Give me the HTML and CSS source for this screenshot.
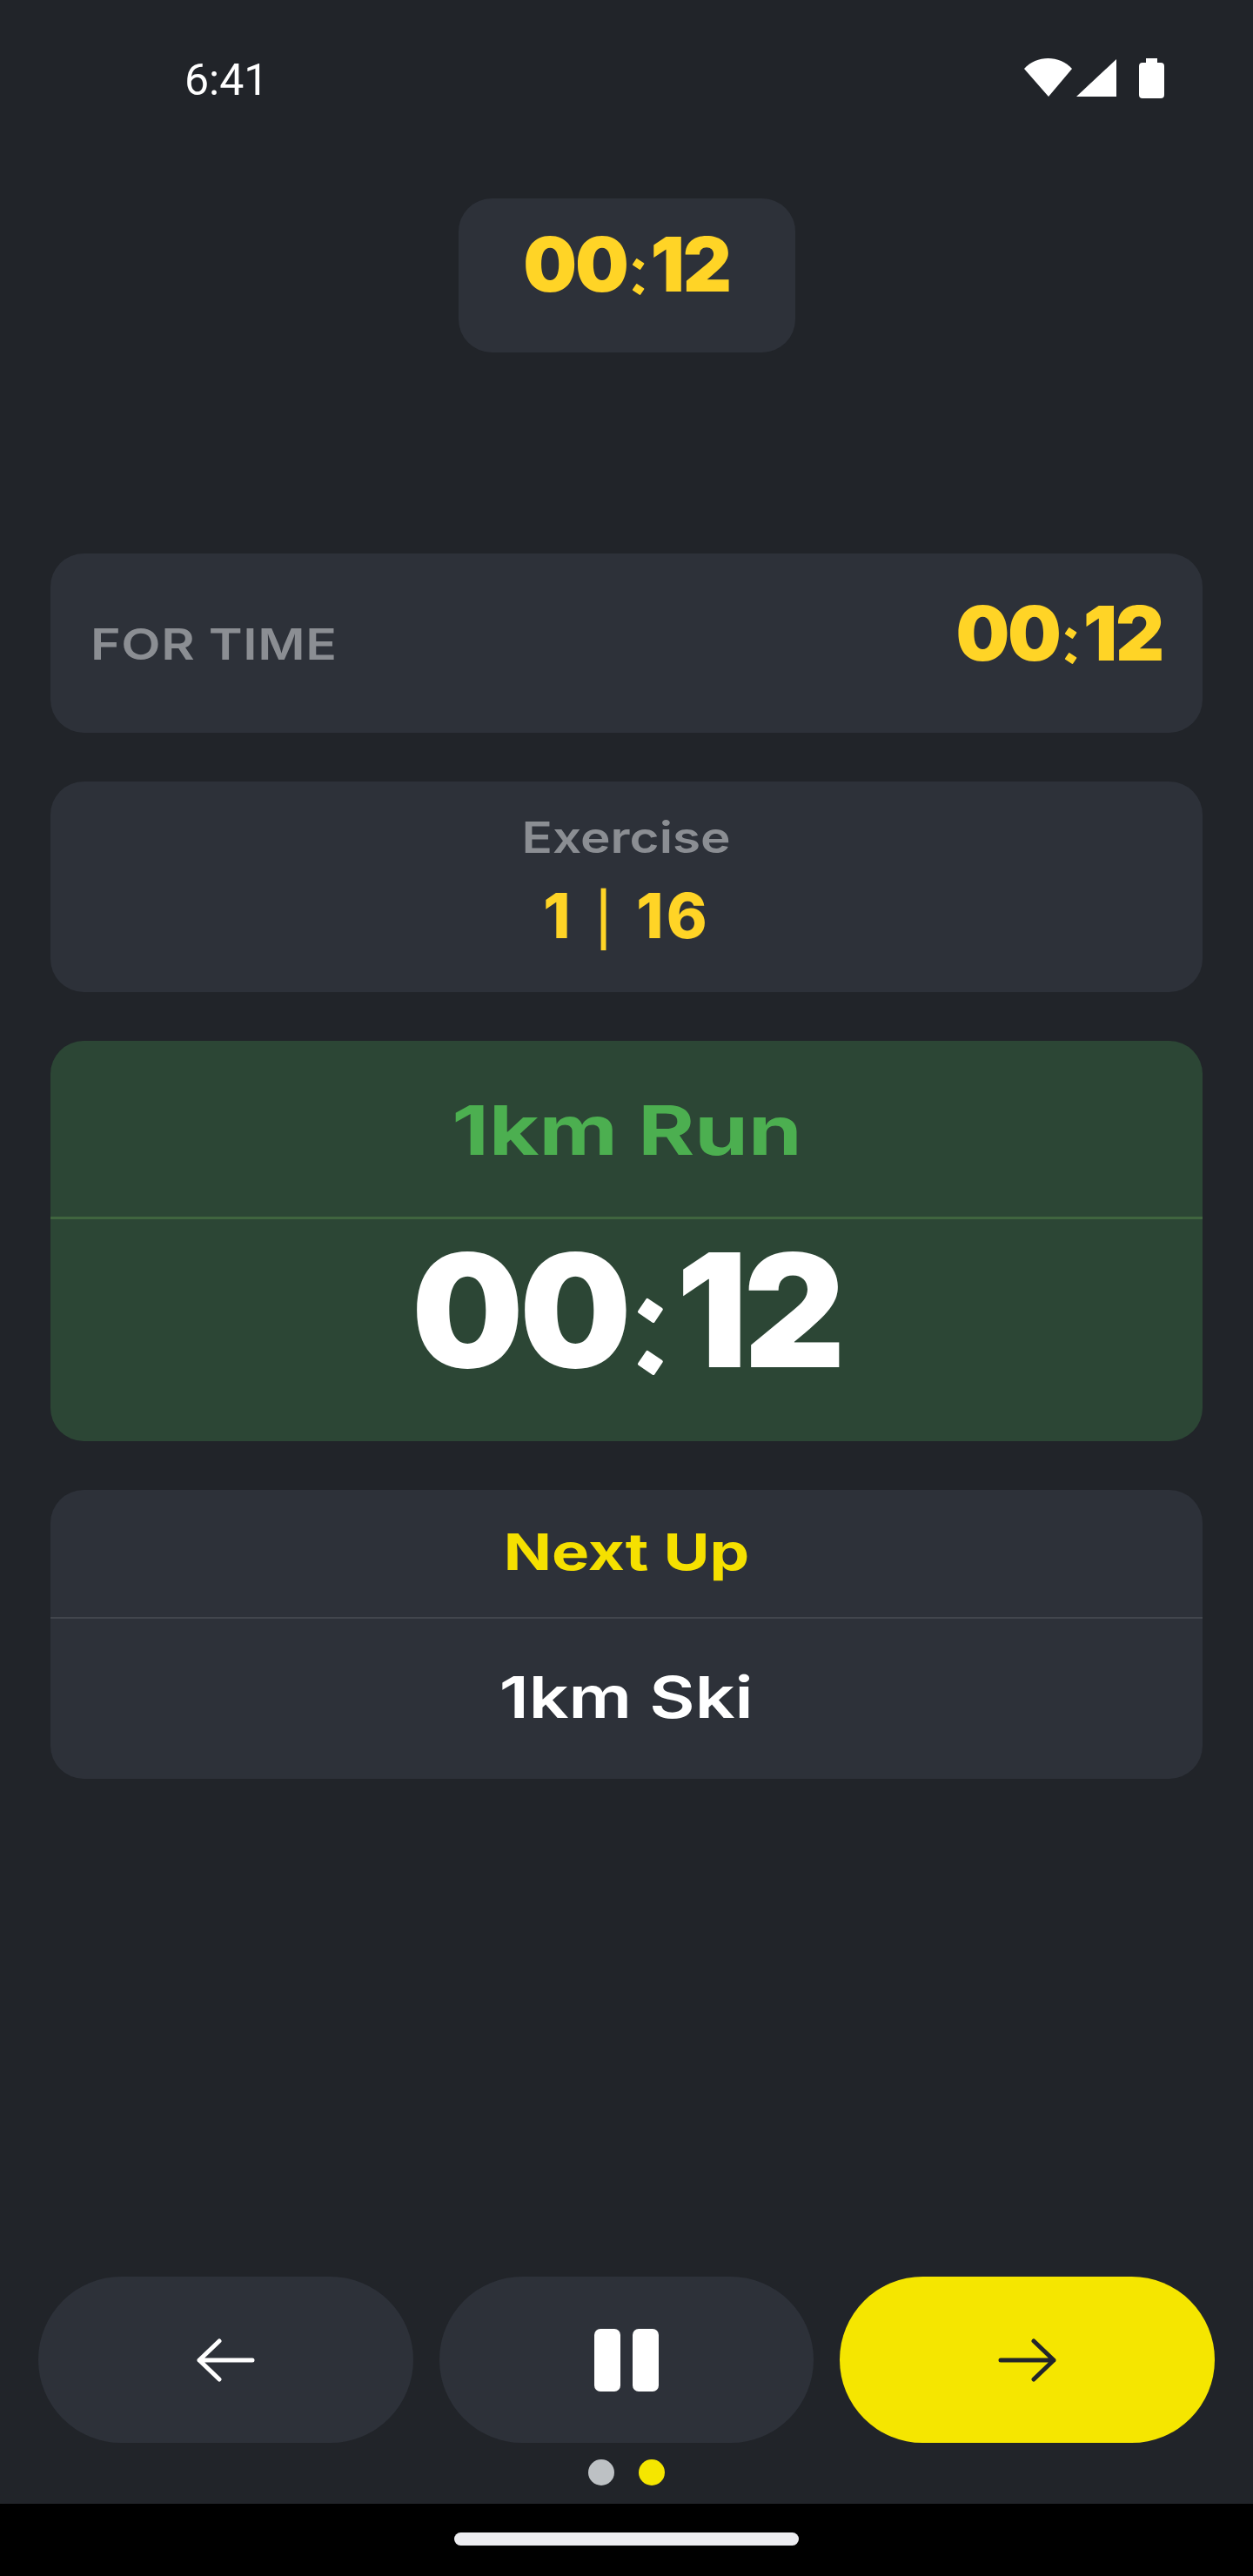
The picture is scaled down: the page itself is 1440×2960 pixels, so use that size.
FILE: index.html
```html
<!DOCTYPE html>
<html lang="en">
<head>
    <meta charset="UTF-8">
    <meta name="viewport" content="width=device-width, initial-scale=1.0">
    <title>Workout Timer</title>
    <link rel="stylesheet" href="styles.css">
</head>
<body>

<div class="screen">
    <div class="status-bar">
        <span class="status-time">6:41</span>
        <div class="status-icons">
            <svg width="55" height="44" viewBox="0 0 55 44"><path d="M0 12 C 14 -4, 41 -4, 55 12 L28 44 Z" fill="#fff"/></svg>
            <svg width="46" height="44" viewBox="0 0 46 44"><path d="M46 1 V44 H0 Z" fill="#fff"/></svg>
            <svg class="battery" width="29" height="46" viewBox="0 0 29 46"><path d="M8 0 H21 V5 H25 Q29 5 29 9 V42 Q29 46 25 46 H4 Q0 46 0 42 V9 Q0 5 4 5 H8 Z" fill="#fff"/></svg>
        </div>
    </div>

    <div class="total-wrap">
        <div class="total-pill"><span class="digits">00<span class="colon">:</span>12</span></div>
    </div>

    <div class="cards">
        <div class="card for-time">
            <span class="for-time-label">FOR TIME</span>
            <span class="digits for-time-value">00<span class="colon">:</span>12</span>
        </div>

        <div class="card exercise">
            <div class="exercise-label"><span>Exercise</span></div>
            <div class="digits exercise-count">1 <span class="sep">|</span> 16</div>
        </div>

        <div class="card current">
            <div class="current-name"><span>1km Run</span></div>
            <div class="current-time"><span class="digits">00<span class="colon">:</span>12</span></div>
        </div>

        <div class="card next">
            <div class="next-label"><span>Next Up</span></div>
            <div class="next-name"><span>1km Ski</span></div>
        </div>
    </div>

    <div class="controls">
        <button class="ctrl">
            <svg width="68" height="50" viewBox="0 0 68 50"><path d="M65 25 H4 M27 3 L4 25 L27 47" fill="none" stroke="#fff" stroke-width="5" stroke-linecap="round" stroke-linejoin="round"/></svg>
        </button>
        <button class="ctrl">
            <svg width="74" height="72" viewBox="0 0 74 72"><rect width="30" height="72" rx="7" fill="#fff"/><rect x="44" width="30" height="72" rx="7" fill="#fff"/></svg>
        </button>
        <button class="ctrl ctrl-next">
            <svg width="68" height="50" viewBox="0 0 68 50"><path d="M3 25 H64 M41 3 L64 25 L41 47" fill="none" stroke="#22252b" stroke-width="5" stroke-linecap="round" stroke-linejoin="round"/></svg>
        </button>
    </div>

    <div class="dots">
        <span class="dot"></span>
        <span class="dot dot-on"></span>
    </div>
</div>

<div class="nav-bar">
    <div class="nav-handle"></div>
</div>

</body>
</html>
```

FILE: styles.css
```css
body {
    margin: 0;
    background: #000;
    font-family: 'Inter', 'Liberation Sans', sans-serif;
    color: #fff;
}

.screen {
    height: 2877px;
    box-sizing: border-box;
    background: #212429;
    display: flex;
    flex-direction: column;
}

.status-bar {
    height: 180px;
    box-sizing: border-box;
    padding: 67px 102px 0 212px;
    display: flex;
    justify-content: space-between;
    align-items: flex-start;
}

.status-time {
    margin-top: 2px;
    font-family: 'Roboto', sans-serif;
    font-size: 50px;
    line-height: 46px;
}

.status-icons {
    display: flex;
    align-items: flex-start;
    gap: 5px;
}

.battery {
    margin-left: 21px;
}

.digits {
    font-family: 'Inter', 'Liberation Sans', sans-serif;
    font-weight: 900;
    letter-spacing: -0.025em;
}

/* the colon of the timer font has tilted square dots */
.colon {
    display: inline-block;
    position: relative;
    width: 0.31em;
    line-height: 1;
    font-weight: 400;
    letter-spacing: 0;
    -webkit-text-fill-color: transparent;
}

.colon::before,
.colon::after {
    content: "";
    position: absolute;
    left: 0.08em;
    width: 0.128em;
    height: 0.108em;
    background: currentColor;
    border-radius: 0.01em;
    transform: rotate(34deg);
}

.colon::before {
    top: 0.45em;
}

.colon::after {
    top: 0.78em;
}

/* Inter is narrower than the app's label font, so the labels get stretched */
.exercise-label span,
.current-name span,
.next-label span,
.next-name span {
    display: inline-block;
}

.total-wrap {
    display: flex;
    justify-content: center;
    padding-top: 48px;
}

.total-pill {
    width: 387px;
    height: 177px;
    box-sizing: border-box;
    padding-top: 30px;
    background: #2d3139;
    border-radius: 38px;
    text-align: center;
    font-size: 87px;
    line-height: 92px;
    color: #ffd426;
}

.cards {
    padding: 231px 58px 0;
    display: flex;
    flex-direction: column;
    gap: 56px;
}

.card {
    background: #2d3139;
    border-radius: 38px;
    overflow: hidden;
}

.for-time {
    height: 206px;
    box-sizing: border-box;
    padding: 42px 46px 0;
    display: flex;
    justify-content: space-between;
    align-items: flex-start;
}

.for-time-label {
    margin-top: 32px;
    font-size: 50px;
    line-height: 60px;
    font-weight: 600;
    letter-spacing: 0.5px;
    color: #8b8e93;
    transform: scaleX(1.18);
    transform-origin: left center;
}

.for-time-value {
    font-size: 87px;
    line-height: 100px;
    color: #ffd426;
}

.exercise {
    height: 242px;
    box-sizing: border-box;
    padding-top: 32px;
    text-align: center;
}

.exercise-label {
    font-size: 50px;
    line-height: 64px;
    font-weight: 600;
    color: #8b8e93;
}

.exercise-label span {
    transform: scaleX(1.17);
}

.exercise-count {
    margin-top: 16px;
    font-size: 71px;
    line-height: 84px;
    font-weight: 800;
    letter-spacing: 3px;
    word-spacing: 6px;
    color: #ffd426;
}

.sep {
    font-weight: 500;
    font-size: 0.84em;
}

.current {
    background: #2c4635;
    height: 460px;
}

.current-name {
    height: 205px;
    box-sizing: border-box;
    padding-top: 58px;
    border-bottom: 3px solid #40653f;
    text-align: center;
    font-size: 78px;
    line-height: 90px;
    font-weight: 650;
    color: #4caf50;
}

.current-name span {
    transform: scaleX(1.27);
}

.current-time {
    text-align: center;
    font-size: 181px;
    line-height: 210px;
}

.next {
    height: 332px;
}

.next-label {
    height: 148px;
    box-sizing: border-box;
    padding-top: 36px;
    border-bottom: 2px solid #42464d;
    text-align: center;
    font-size: 58px;
    line-height: 70px;
    font-weight: 650;
    color: #f5e000;
}

.next-label span {
    transform: scaleX(1.25);
}

.next-name {
    padding-top: 50px;
    text-align: center;
    font-size: 66px;
    line-height: 80px;
    font-weight: 600;
}

.next-name span {
    transform: scaleX(1.22);
}

.controls {
    margin-top: auto;
    padding: 0 44px;
    display: flex;
    gap: 30px;
}

.ctrl {
    flex: 1;
    height: 191px;
    border: none;
    border-radius: 96px;
    background: #2d3139;
    display: flex;
    align-items: center;
    justify-content: center;
    padding: 0;
}

.ctrl-next {
    background: #f5e600;
}

.dots {
    height: 70px;
    box-sizing: border-box;
    padding-top: 19px;
    display: flex;
    justify-content: center;
    gap: 28px;
}

.dot {
    width: 30px;
    height: 30px;
    border-radius: 50%;
    background: #bdc1c4;
}

.dot-on {
    background: #f5e600;
}

.nav-bar {
    height: 83px;
    background: #000;
    display: flex;
    justify-content: center;
    padding-top: 33px;
    box-sizing: border-box;
}

.nav-handle {
    width: 396px;
    height: 15px;
    border-radius: 8px;
    background: #ececf0;
}
```
